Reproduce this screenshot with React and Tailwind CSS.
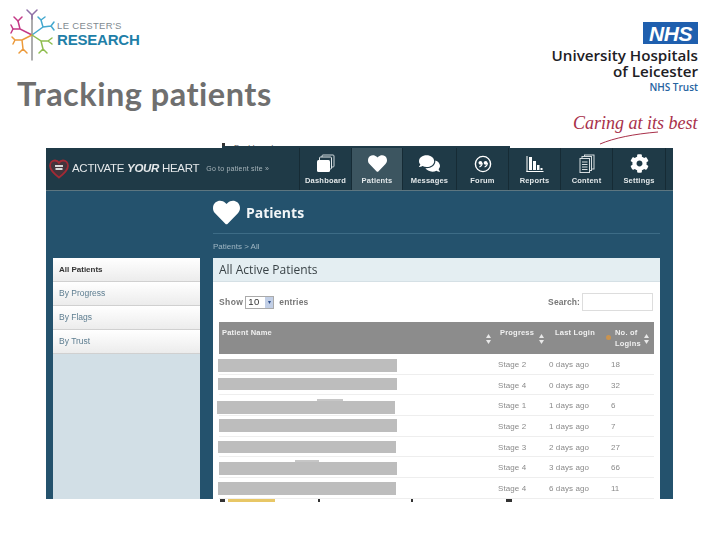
import { FaHeart, FaComments, FaCog } from "react-icons/fa";

const sans = "font-['Liberation_Sans',Arial,sans-serif]";

const TreeLogo = () => (
    <svg width="46" height="52" viewBox="0 0 46 52" fill="none" strokeWidth="1.5" strokeLinecap="round">
        <path d="M22 6V51" stroke="#8a8a8a" strokeWidth="1.4" />
        <path d="M22 26L10 20L8 12M10 20L3 20" stroke="#c43a86" />
        <path d="M8 12L4 8M8 12L12 8M3 20L1 16M3 20L1 24" stroke="#c43a86" />
        <path d="M22 6L17 1M22 6L27 1M22 6V10" stroke="#8f6fa8" />
        <path d="M22 26L33 18L31 11M33 18L41 17M31 11L28 8M31 11L35 8M41 17L44 13M41 17L44 21" stroke="#45a9cf" />
        <path d="M22 26L12 31L13 40M12 31L5 31M5 31L2 28M5 31L3 35M13 40L9 44M13 40L17 44" stroke="#ec9a3a" />
        <path d="M22 26L31 32L33 40M31 32L38 32M38 32L42 29M38 32L42 35M33 40L29 44M33 40L37 44" stroke="#8fbd4f" />
    </svg>
);

const HeartBadge = () => (
    <svg width="20" height="20" viewBox="0 0 20 20" className="shrink-0">
        <path d="M10 18.5C4 14 1 11 1 6.8C1 3.6 3.4 1.5 6 1.5C7.8 1.5 9.2 2.4 10 3.8C10.8 2.4 12.2 1.5 14 1.5C16.6 1.5 19 3.6 19 6.8C19 11 16 14 10 18.5Z" fill="#43343c" stroke="#a32a35" strokeWidth="1.8" />
        <path d="M6 7H14M6.5 10H13.5" stroke="#d8d8d8" strokeWidth="1.8" />
    </svg>
);

const DashboardIcon = () => (
    <svg width="19" height="19" viewBox="0 0 19 19" fill="none">
        <rect x="6" y="1" width="12" height="12" rx="1" stroke="#cfd8dc" />
        <rect x="3.5" y="3" width="12" height="12" rx="1" fill="#1f3a47" stroke="#dfe6e8" />
        <rect x="1" y="6" width="13" height="12" rx="1.5" fill="#fff" />
    </svg>
);

const ForumIcon = () => (
    <svg width="18" height="18" viewBox="0 0 18 18" fill="none">
        <circle cx="9" cy="9" r="7.6" stroke="#fff" strokeWidth="1.4" />
        <circle cx="6.4" cy="7.8" r="1.9" fill="#fff" />
        <circle cx="11.6" cy="7.8" r="1.9" fill="#fff" />
        <path d="M8.2 8C8.2 10 7 11.4 5.4 12M13.4 8C13.4 10 12.2 11.4 10.6 12" stroke="#fff" strokeWidth="1.1" />
    </svg>
);

const ReportsIcon = () => (
    <svg width="18" height="18" viewBox="0 0 18 18" fill="#fff">
        <rect x="0.5" y="1" width="1" height="16" />
        <rect x="0.5" y="16" width="17" height="1" />
        <rect x="3" y="2" width="3" height="13" />
        <rect x="7" y="6" width="3" height="9" />
        <rect x="11" y="10" width="2.5" height="5" />
        <rect x="14.5" y="13" width="2" height="2" />
    </svg>
);

const ContentIcon = () => (
    <svg width="16" height="19" viewBox="0 0 16 19" fill="none" stroke="#d5dcdf">
        <rect x="5.5" y="1" width="9.5" height="14" />
        <rect x="3" y="2.5" width="9.5" height="14" fill="#1f3a47" />
        <rect x="1" y="4.5" width="9.5" height="14" fill="#1f3a47" />
        <path d="M3 8H8.5M3 10.5H8.5M3 13H8.5M3 15.5H8.5" />
    </svg>
);

const navItems = [
    { label: "Dashboard", width: "w-[52px]", icon: <DashboardIcon /> },
    { label: "Patients", width: "w-[51px]", active: true, icon: <FaHeart size={19} color="#fff" /> },
    { label: "Messages", width: "w-[54px]", icon: <FaComments size={21} color="#fff" /> },
    { label: "Forum", width: "w-[52px]", icon: <ForumIcon /> },
    { label: "Reports", width: "w-[52px]", icon: <ReportsIcon /> },
    { label: "Content", width: "w-[52px]", icon: <ContentIcon /> },
    { label: "Settings", width: "w-[53px]", icon: <FaCog size={19} color="#fff" /> },
];

const patients = [
    { stage: "Stage 2", login: "0 days ago", count: "18", bar: "ml-[-1px] w-[179px]", top: "mt-[5px]" },
    { stage: "Stage 4", login: "0 days ago", count: "32", bar: "ml-[-1px] w-[179px]", top: "mt-[3px]" },
    { stage: "Stage 1", login: "1 days ago", count: "6", bar: "ml-[-2px] w-[178px]", top: "mt-[6px]", bump: "left-[100px] w-[26px]" },
    { stage: "Stage 2", login: "1 days ago", count: "7", bar: "ml-0 w-[178px]", top: "mt-[3px]" },
    { stage: "Stage 3", login: "2 days ago", count: "27", bar: "ml-[-1px] w-[178px]", top: "mt-[4px]" },
    { stage: "Stage 4", login: "3 days ago", count: "66", bar: "ml-0 w-[178px]", top: "mt-[5px]", bump: "left-[76px] w-[24px]" },
    { stage: "Stage 4", login: "6 days ago", count: "11", bar: "ml-[-1px] w-[178px]", top: "mt-[4px]" },
];

const sideItems = ["By Progress", "By Flags", "By Trust"];

const SortArrows = () => (
    <svg width="5" height="10" viewBox="0 0 5 10" fill="#e8e8e8" className="shrink-0">
        <path d="M2.5 0L5 4H0ZM2.5 10L0 6H5Z" />
    </svg>
);

const App = () => {
    return (
        <div className={`relative w-[720px] h-[540px] overflow-hidden bg-white ${sans}`}>
            {/* slide header */}
            <div className="flex justify-between h-[148px]">
                <div className="pl-[10px] pt-[9px]">
                    <div className="flex items-start gap-[1px]">
                        <TreeLogo />
                        <div className="pt-[12px] leading-none">
                            <div className="text-[9.5px] text-[#7f8a90] tracking-[0.35px]">LE CESTER'S</div>
                            <div className="text-[15px] font-bold text-[#1f7fa8] mt-[1px] tracking-[-0.2px]">RESEARCH</div>
                        </div>
                    </div>
                    <h1 className="mt-[14px] ml-[7px] font-['Lato',sans-serif] text-[32.5px] font-bold leading-[38px] text-[#6f6f6f] tracking-[0.5px] whitespace-nowrap">
                        Tracking patients
                    </h1>
                </div>
                <div className="w-[178px] pr-[22px] pt-[22px] flex flex-col items-end">
                    <div className="w-[55px] h-[22px] bg-[#1f5fae] flex items-center justify-center text-white font-bold italic text-[21px] leading-none tracking-[-0.5px]">
                        NHS
                    </div>
                    <div className="mt-[4px] font-['Open_Sans',sans-serif] font-semibold text-[15.2px] leading-[15.5px] text-[#1d2024] text-right whitespace-nowrap">
                        <div>University Hospitals</div>
                        <div>of Leicester</div>
                    </div>
                    <div className="mt-[2px] font-['Open_Sans',sans-serif] font-semibold text-[10px] leading-[12px] text-[#26639f]">NHS Trust</div>
                    <div className="relative mt-[19px] w-[125px] h-[32px] font-['Liberation_Serif',serif] italic text-[18px] leading-[22px] text-[#a8304a] whitespace-nowrap">
                        Caring at its best
                        <svg width="60" height="14" viewBox="0 0 60 14" fill="none" className="absolute left-[26px] top-[19px]">
                            <path d="M1 13C15 7 35 3 59 1" stroke="#a8304a" strokeWidth="1" />
                        </svg>
                    </div>
                </div>
            </div>

            {/* scrap of the slide behind the screenshot */}
            <div className="absolute left-[222px] top-[143px] w-[288px] h-[5px] overflow-hidden flex gap-[9px] border-b-2 border-[#1f3a47] text-[8px] leading-[9px] text-[#555]">
                <span className="w-[3px] h-[4px] bg-[#333]"></span>
                <span>Dashboard</span>
            </div>

            {/* embedded screenshot */}
            <div className="relative ml-[46px] w-[627px] h-[351px] overflow-hidden bg-[#24526d] blur-[0.35px]">
                <div className="flex h-[43px] bg-[#1f3a47] border-b border-[#5d7680]">
                    <div className="w-[254px] flex items-center pl-[3px] border-r border-[#162b35]">
                        <HeartBadge />
                        <span className="ml-[3px] text-[11.5px] text-[#e4e8ea] tracking-[-0.3px] whitespace-nowrap">
                            ACTIVATE <b className="italic">YOUR</b> HEART
                        </span>
                        <span className="ml-[7px] text-[7px] text-[#a9b6bc] tracking-[0.2px] whitespace-nowrap">Go to patient site »</span>
                    </div>
                    {navItems.map((item) => (
                        <div
                            key={item.label}
                            className={`${item.width} flex flex-col items-center pt-[5px] border-r border-[#162b35] ${item.active ? "bg-[#3c5560]" : ""}`}
                        >
                            <div className="h-[21px] flex items-center">{item.icon}</div>
                            <span className="mt-[2px] text-[7.5px] leading-[10px] font-bold text-[#e3e8ea] tracking-[0.2px]">{item.label}</span>
                        </div>
                    ))}
                </div>

                <div className="flex pl-[7px] gap-[13px]">
                    <div className="w-[147px] h-[241px] mt-[67px] bg-[#d2dfe6]">
                        <div className="h-[24px] pl-[6px] flex items-center bg-gradient-to-b from-white to-[#ececec] text-[8px] font-bold text-[#333] border-b border-[#d0d0d0]">
                            All Patients
                        </div>
                        {sideItems.map((item) => (
                            <div
                                key={item}
                                className="h-[24px] pl-[6px] flex items-center bg-gradient-to-b from-white to-[#ececec] text-[8.5px] text-[#5d7d90] border-b border-[#d0d0d0]"
                            >
                                {item}
                            </div>
                        ))}
                    </div>

                    <div className="w-[447px]">
                        <div className="h-[35px] mt-[8px] pb-[8px] flex items-center gap-[6px] border-b border-[#3d6c86]">
                            <FaHeart size={27} color="#fff" />
                            <span className="font-['Open_Sans',sans-serif] font-bold text-[14px] text-[#f2f6f8]">Patients</span>
                        </div>
                        <div className="h-[24px] pt-[2px] flex items-center text-[8px] text-[#9fb6c3]">Patients &gt; All</div>

                        <div className="h-[241px] bg-white">
                            <div className="h-[24px] pl-[6px] flex items-center bg-[#e4eef2] font-['Open_Sans',sans-serif] text-[12px] text-[#3a4347] border-b border-[#d5e0e5]">
                                All Active Patients
                            </div>
                            <div className="h-[40px] pl-[6px] pr-[7px] flex items-center justify-between text-[8.5px] text-[#777]">
                                <div className="flex items-center tracking-[0.4px] font-bold">
                                    <span>Show</span>
                                    <span className="ml-[2px] w-[29px] h-[13px] border border-[#aaa] flex items-center justify-between pl-[2px] text-[9.5px] font-normal text-[#333]">
                                        10
                                        <span className="w-[8px] h-[11px] bg-[#c2cfe6] text-[#30508c] text-[6px] leading-[11px] text-center">▾</span>
                                    </span>
                                    <span className="ml-[5px] tracking-[0.2px]">entries</span>
                                </div>
                                <div className="flex items-center gap-[2px] tracking-[0.1px] font-bold">
                                    <span>Search:</span>
                                    <span className="w-[71px] h-[18px] border border-[#ddd] bg-white"></span>
                                </div>
                            </div>

                            <div className="mx-[6px] h-[32px] bg-[#8c8c8c] flex text-[7.5px] font-bold text-[#f0f0f0] leading-[11px] tracking-[0.2px]">
                                <div className="w-[273px] pl-[3px] pt-[5px] flex justify-between pr-[1px]">
                                    <span>Patient Name</span>
                                    <span className="self-center mt-[-3px]"><SortArrows /></span>
                                </div>
                                <div className="w-[56px] pl-[8px] pt-[5px] flex gap-[5px]">
                                    <span>Progress</span>
                                    <span className="self-center mt-[-3px]"><SortArrows /></span>
                                </div>
                                <div className="w-[58px] pl-[7px] pt-[5px] whitespace-nowrap">Last Login</div>
                                <div className="flex-1 pt-[5px] flex">
                                    <span className="w-[5px] h-[5px] mt-[8px] rounded-full bg-[#d9953f] opacity-80 shrink-0"></span>
                                    <span className="ml-[4px] w-[26px]">No. of Logins</span>
                                    <span className="self-center mt-[-3px] ml-[3px]"><SortArrows /></span>
                                </div>
                            </div>

                            <div className="mx-[6px]">
                                {patients.map((row) => (
                                    <div key={row.stage + row.login} className="h-[20.7px] flex border-b border-[#eeeeee] text-[8px] text-[#8a8a8a]">
                                        <div className="w-[279px]">
                                            <div className={`relative h-[12.5px] bg-[#bdbdbd] ${row.bar} ${row.top}`}>
                                                {row.bump && <span className={`absolute top-[-2px] h-[2px] bg-[#c6c6c6] ${row.bump}`}></span>}
                                            </div>
                                        </div>
                                        <div className="w-[51px] pt-[5px] tracking-[0.1px]">{row.stage}</div>
                                        <div className="w-[62px] pt-[5px] tracking-[0.1px]">{row.login}</div>
                                        <div className="pt-[5px]">{row.count}</div>
                                    </div>
                                ))}
                            </div>
                        </div>
                    </div>
                </div>
            </div>

            {/* cut-off content under the screenshot */}
            <div className="ml-[220px] flex items-start gap-[3px] h-[3px] overflow-hidden">
                <span className="w-[5px] h-[3px] bg-[#333]"></span>
                <span className="w-[47px] h-[3px] bg-[#e8c766]"></span>
                <span className="ml-[40px] w-[2px] h-[3px] bg-[#333]"></span>
                <span className="ml-[88px] w-[2px] h-[3px] bg-[#333]"></span>
                <span className="ml-[90px] w-[6px] h-[3px] bg-[#333]"></span>
            </div>
        </div>
    );
};

export default App;
